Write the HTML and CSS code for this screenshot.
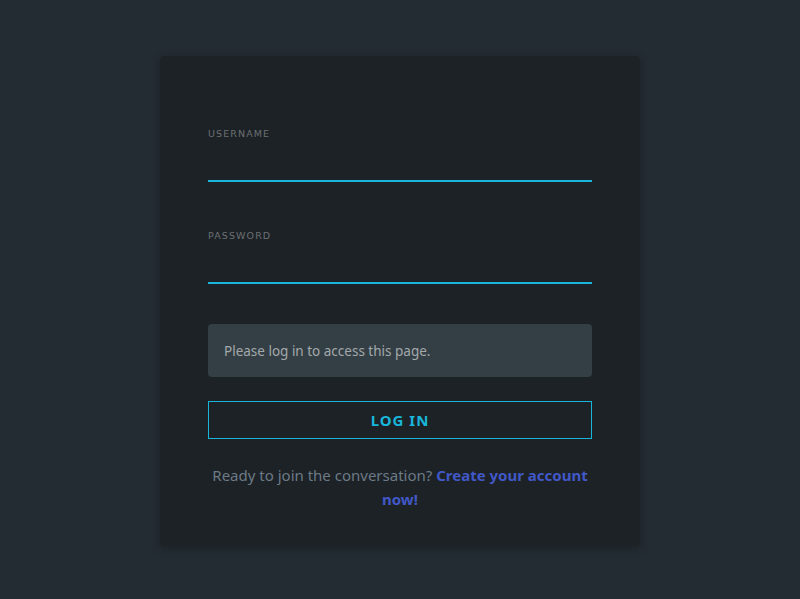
FILE: index.html
```html
<!DOCTYPE html>
<html>
<head>
<meta charset="utf-8">
<link rel="stylesheet" href="styles.css">
</head>
<body>
<div class="page">
  <div class="card">
    <div class="field">
      <label class="label">USERNAME</label>
      <div class="input"></div>
    </div>
    <div class="field second">
      <label class="label">PASSWORD</label>
      <div class="input"></div>
    </div>
    <div class="notice">Please log in to access this page.</div>
    <button class="btn">LOG IN</button>
    <p class="footer">Ready to join the conversation? <a class="link">Create your account now!</a></p>
  </div>
</div>
</body>
</html>
```
FILE: styles.css
```css
html, body {
  margin: 0;
  padding: 0;
  background: #232c32;
  font-family: "Noto Sans", "Open Sans", sans-serif;
}
.page {
  height: 599px;
  display: flex;
  justify-content: center;
  align-items: flex-start;
  padding-top: 56px;
  box-sizing: border-box;
}
.card {
  width: 480px;
  height: 490px;
  box-sizing: border-box;
  background: #1c2226;
  border-radius: 4px;
  box-shadow: 0 2px 8px rgba(0,0,0,0.25);
  padding: 71px 48px 35px;
  display: flex;
  flex-direction: column;
}
.field {
  display: flex;
  flex-direction: column;
}
.second {
  margin-top: 47px;
}
.label {
  font-family: "DejaVu Sans", sans-serif;
  font-size: 9.5px;
  letter-spacing: 1.1px;
  line-height: 14px;
  color: #6c7073;
}
.input {
  height: 35px;
  margin-top: 4px;
  border-bottom: 2px solid #19b6dc;
}
.notice {
  margin-top: 40px;
  height: 53px;
  box-sizing: border-box;
  background: #343f45;
  border-radius: 4px;
  padding: 0 16px;
  display: flex;
  align-items: center;
  font-size: 13.5px;
  color: #a3a8ab;
}
.btn {
  margin-top: 24px;
  height: 38px;
  background: transparent;
  border: 1px solid #19b6dc;
  color: #19b6dc;
  font-family: "Noto Sans", sans-serif;
  font-weight: 700;
  font-size: 15px;
  letter-spacing: 1px;
  padding: 0;
}
.footer {
  margin: 24px 0 0;
  text-align: center;
  font-size: 15px;
  line-height: 24px;
  color: #6d7a86;
}
.link {
  color: #4158c6;
  font-weight: 700;
}
```
